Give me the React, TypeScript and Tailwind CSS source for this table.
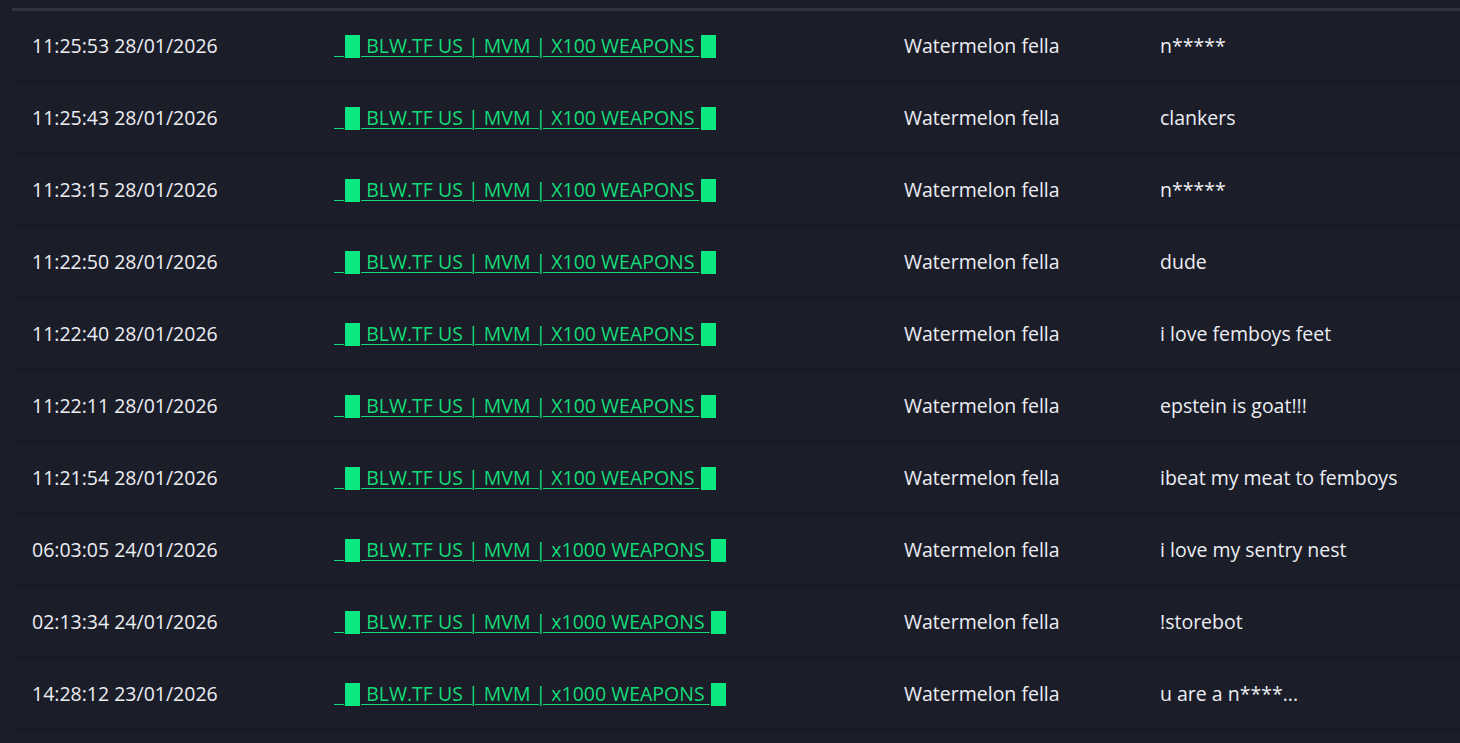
const rows = [
  { time: '11:25:53 28/01/2026', server: 'X100 WEAPONS', name: 'Watermelon fella', msg: 'n*****' },
  { time: '11:25:43 28/01/2026', server: 'X100 WEAPONS', name: 'Watermelon fella', msg: 'clankers' },
  { time: '11:23:15 28/01/2026', server: 'X100 WEAPONS', name: 'Watermelon fella', msg: 'n*****' },
  { time: '11:22:50 28/01/2026', server: 'X100 WEAPONS', name: 'Watermelon fella', msg: 'dude' },
  { time: '11:22:40 28/01/2026', server: 'X100 WEAPONS', name: 'Watermelon fella', msg: 'i love femboys feet' },
  { time: '11:22:11 28/01/2026', server: 'X100 WEAPONS', name: 'Watermelon fella', msg: 'epstein is goat!!!' },
  { time: '11:21:54 28/01/2026', server: 'X100 WEAPONS', name: 'Watermelon fella', msg: 'ibeat my meat to femboys' },
  { time: '06:03:05 24/01/2026', server: 'x1000 WEAPONS', name: 'Watermelon fella', msg: 'i love my sentry nest' },
  { time: '02:13:34 24/01/2026', server: 'x1000 WEAPONS', name: 'Watermelon fella', msg: '!storebot' },
  { time: '14:28:12 23/01/2026', server: 'x1000 WEAPONS', name: 'Watermelon fella', msg: 'u are a n****...' },
];

// the server name wraps itself in two full blocks
function Block() {
  return <span className="inline-block w-[15px] h-[23px] mx-[1px] bg-[#0be881] align-[-5px]" aria-hidden />;
}

export default function App() {
  return (
    <div className="min-h-screen bg-[#1b1d29] pt-2 pl-3 font-['Open_Sans','Liberation_Sans',sans-serif] text-[19.5px] text-[#eceef3] overflow-hidden">
      <table className="w-[1500px] border-collapse border-t-[3px] border-[#31323d] table-fixed">
        <colgroup>
          <col className="w-[302px]" />
          <col className="w-[570px]" />
          <col className="w-[256px]" />
          <col />
        </colgroup>
        <tbody>
          {rows.map((r, i) => (
            <tr key={i} className="h-[72px] border-b-2 border-[#171923]">
              <td className="pl-5 whitespace-nowrap">{r.time}</td>
              <td className="pl-5 whitespace-pre">
                <a href="#" className="text-[#12dc78] underline underline-offset-[3px] decoration-1">
                  {'  '}<Block />{' BLW.TF US | MVM | ' + r.server + ' '}<Block />
                </a>
              </td>
              <td className="pl-5 whitespace-nowrap">{r.name}</td>
              <td className="pl-5 whitespace-nowrap">{r.msg}</td>
            </tr>
          ))}
        </tbody>
      </table>
    </div>
  );
}
